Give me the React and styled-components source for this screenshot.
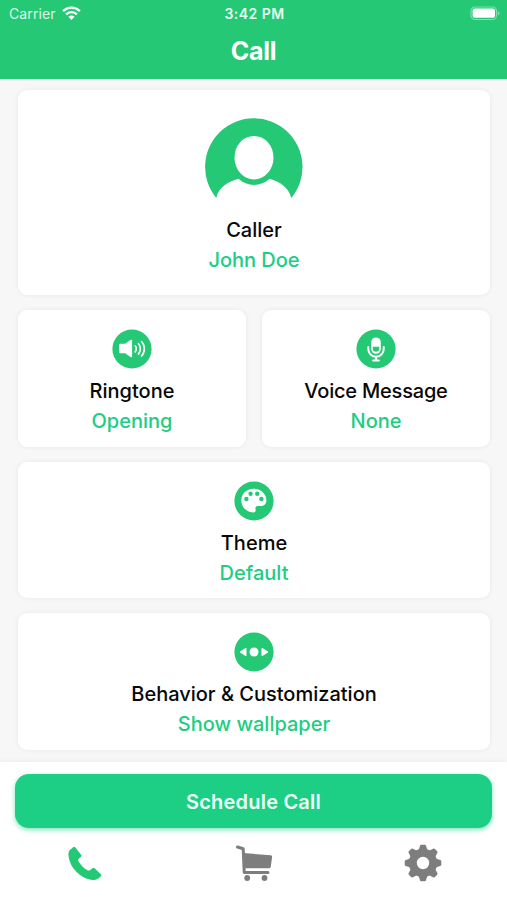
import styled, { createGlobalStyle } from "styled-components";

const GlobalStyle = createGlobalStyle`
  * {
    box-sizing: border-box;
  }

  body {
    margin: 0;
    font-family: Inter, "Liberation Sans", sans-serif;
    background: #f7f7f7;
  }
`;

const Screen = styled.div`
  display: flex;
  flex-direction: column;
  width: 507px;
  height: 900px;
  overflow: hidden;
  background: #f7f7f7;
`;

const Header = styled.header`
  height: 79px;
  flex-shrink: 0;
  color: white;
  background: #25c875;
`;

const StatusBar = styled.div`
  display: grid;
  grid-template-columns: 1fr auto 1fr;
  align-items: center;
  height: 27px;
  padding: 0 7px 0 9px;
`;

const Carrier = styled.div`
  display: flex;
  align-items: center;
  gap: 6px;
  font-size: 14px;
  letter-spacing: 0.1px;
  color: #dcf9e9;
`;

const Time = styled.div`
  font-size: 14px;
  font-weight: 600;
  letter-spacing: 0.45px;
  color: #e8fcf1;
`;

const Battery = styled.svg`
  justify-self: end;
`;

const Title = styled.h1`
  margin: 0;
  font-size: 25px;
  line-height: 48px;
  font-weight: 700;
  letter-spacing: -0.3px;
  text-align: center;
`;

const Content = styled.main`
  display: grid;
  grid-template-columns: 1fr 1fr;
  grid-template-rows: 205px 136.5px 136.5px 136.5px;
  gap: 15px 16px;
  flex: 1;
  min-height: 0;
  padding: 11px 17px 0 18px;
`;

const Card = styled.section`
  display: flex;
  flex-direction: column;
  align-items: center;
  grid-column: ${(props) => (props.$wide ? "1 / -1" : "auto")};
  padding-top: ${(props) => (props.$tall ? "28px" : "19px")};
  border-radius: 9px;
  background: white;
  box-shadow: 0 0 5px rgba(0, 0, 0, 0.07);
`;

const Label = styled.div`
  margin-top: ${(props) => (props.$tall ? "15px" : "7px")};
  font-size: 20px;
  line-height: 30px;
  font-weight: 500;
  letter-spacing: ${(props) => props.$spacing || "0"};
  color: #080808;
`;

const Value = styled.div`
  font-size: 20px;
  line-height: 30px;
  font-weight: 450;
  color: #20cd82;
`;

const Footer = styled.footer`
  height: 138px;
  flex-shrink: 0;
  padding: 12px 15px 0;
  background: white;
  box-shadow: 0 0 6px rgba(0, 0, 0, 0.06);
  z-index: 1;
`;

const ScheduleButton = styled.button`
  display: block;
  width: 100%;
  height: 54px;
  padding: 1px 0 0;
  border: none;
  border-radius: 14px;
  font-family: inherit;
  font-size: 20px;
  font-weight: 600;
  letter-spacing: 0.2px;
  color: #effff7;
  background: #1dcf84;
  box-shadow: 0 2px 5px rgba(29, 207, 132, 0.55);
`;

const Tabs = styled.nav`
  display: grid;
  grid-template-columns: repeat(3, 1fr);
  margin: 15px -15px 0;
`;

const Tab = styled.a`
  display: flex;
  justify-content: center;
  color: ${(props) => (props.$active ? "#23c974" : "#7d7d7d")};
`;

const CircleSvg = styled.svg`
  flex-shrink: 0;
`;

const WifiIcon = () => (
  <svg width="19" height="15" viewBox="0 0 19 15" fill="none" stroke="white" strokeWidth="2.4">
    <path d="M1.1 5.1C5.8.5 13.2.5 17.9 5.1" />
    <path d="M4.1 8.3C7.1 5.4 11.9 5.4 14.9 8.3" />
    <path d="M9.5 14 6.4 10.8C8.1 9.2 10.9 9.2 12.6 10.8Z" fill="white" stroke="none" />
  </svg>
);

const AvatarIcon = () => (
  <svg width="98" height="82" viewBox="0 0 98 82">
    <path
      fill="#25c875"
      d="M11.3 80A48.7 48.7 0 1 1 86.3 80C83.5 69 75 64 64.5 60.8C56 69 42 69 33.5 60.8C23 64 13.5 69 11.3 80Z"
    />
    <ellipse cx="49" cy="39.7" rx="19.5" ry="21.8" fill="white" />
  </svg>
);

const RoundIcon = ({ children }) => (
  <CircleSvg width="40" height="40" viewBox="0 0 40 40">
    <circle cx="20" cy="20" r="19.6" fill="#25c875" />
    {children}
  </CircleSvg>
);

const SpeakerIcon = () => (
  <RoundIcon>
    <path
      d="M8.3 14.7h4.9l5.6-3.9c.6-.4 1.3 0 1.3.7v16c0 .7-.7 1.1-1.3.7l-5.6-3.9H8.3c-.7 0-1.1-.4-1.1-1v-7.6c0-.6.4-1 1.1-1Z"
      fill="white"
    />
    <path
      d="M23.2 16.8c1.5 1.6 1.5 4.5 0 6.1M26.4 14.5c2.6 2.9 2.6 7.7 0 10.6M29.5 12.5c3.8 4 3.8 10.6 0 14.6"
      fill="none"
      stroke="white"
      strokeWidth="1.6"
      strokeLinecap="round"
    />
  </RoundIcon>
);

const MicIcon = () => (
  <RoundIcon>
    <rect x="15.2" y="8.4" width="9.6" height="16.4" rx="4.8" fill="white" />
    <path d="M16.8 17.7h6.4v1.8a3.2 3.2 0 0 1-6.4 0Z" fill="#25c875" />
    <path
      d="M12.3 18v2a7.7 7.7 0 0 0 15.4 0v-2M20 28v3.4M17.2 31.5h5.6"
      fill="none"
      stroke="white"
      strokeWidth="2"
      strokeLinecap="round"
    />
  </RoundIcon>
);

const PaletteIcon = () => (
  <RoundIcon>
    <path
      d="M19.5 7.8C12.7 7.8 7.3 12.8 7.3 19.4c0 6.7 5.4 12 12 12 2 0 2.8-1.3 2.3-3-.5-1.8 0-3.5 1.8-3.5h3.7c3.2 0 5.3-2.4 5.3-5.5C32.4 12.8 26.7 7.8 19.5 7.8Z"
      fill="white"
    />
    <g fill="#25c875">
      <circle cx="12.4" cy="18" r="2.2" />
      <circle cx="16.6" cy="12.7" r="2.2" />
      <circle cx="23.2" cy="12.7" r="2.2" />
      <circle cx="27.4" cy="18" r="2.2" />
    </g>
  </RoundIcon>
);

const BehaviorIcon = () => (
  <RoundIcon>
    <circle cx="20" cy="20" r="4.5" fill="white" />
    <path
      d="M6 20 12 16.2v7.6ZM34 20 28 16.2v7.6Z"
      fill="white"
      stroke="white"
      strokeWidth="1"
      strokeLinejoin="round"
    />
  </RoundIcon>
);

const PhoneIcon = () => (
  <svg width="40" height="40" viewBox="0 0 40 40" fill="currentColor">
    <path d="M8.2 4.2 4.8 7.1C3.4 8.4 3.3 11 3.6 13.3C5 24.8 15.4 36 28 37C31.2 37.2 33 36 35.7 33.6C36.6 32.7 36.4 31.8 35.6 31L29.8 25.4C28.9 24.6 28 24.7 27.1 25.4L25.3 27C24.4 27.9 23.2 27.7 22.1 27C18.7 25 15.9 22.1 13.6 18.4C13 17.4 13.1 16.4 13.9 15.6L15.8 13.9C16.7 13.1 16.6 12.2 15.9 11.4L10.4 4.6C9.8 3.8 9 3.6 8.2 4.2Z" />
  </svg>
);

const CartIcon = () => (
  <svg width="40" height="40" viewBox="0 0 40 40" fill="currentColor">
    <path
      d="M3.5 4 9.2 5.8 10.2 29.5H34"
      fill="none"
      stroke="currentColor"
      strokeWidth="3"
      strokeLinecap="round"
      strokeLinejoin="round"
    />
    <path d="M9.5 10 36.6 12.3C37.8 12.4 38.2 13 38.1 14.1L36.8 23.4C36.6 24.6 36 25.2 34.6 25.2H10Z" />
    <circle cx="13.2" cy="35" r="2.9" />
    <circle cx="30.5" cy="35" r="2.9" />
  </svg>
);

// eight teeth, turned around the centre
const GearIcon = () => (
  <svg width="40" height="40" viewBox="0 0 40 40">
    <g fill="currentColor">
      {[0, 45, 90, 135, 180, 225, 270, 315].map((angle) => (
        <path
          key={angle}
          d="M15 9 17 2.8Q17.2 1.7 18.2 1.7h3.6Q22.8 1.7 23 2.8L25 9Z"
          transform={`rotate(${angle} 20 20)`}
        />
      ))}
    </g>
    <circle cx="20" cy="20" r="10.2" fill="none" stroke="currentColor" strokeWidth="8" />
  </svg>
);

function App() {
  return (
    <Screen>
      <GlobalStyle />
      <Header>
        <StatusBar>
          <Carrier>
            Carrier
            <WifiIcon />
          </Carrier>
          <Time>3:42 PM</Time>
          <Battery width="30" height="15" viewBox="0 0 30 15">
            <rect x="1" y="1" width="25.5" height="12.5" rx="4" fill="none" stroke="#82dfae" strokeWidth="1.2" />
            <rect x="2.6" y="2.6" width="22.4" height="9.2" rx="2" fill="white" />
            <path d="M27.8 5v4.5c2.2-.8 2.2-3.7 0-4.5Z" fill="#82dfae" />
          </Battery>
        </StatusBar>
        <Title>Call</Title>
      </Header>
      <Content>
        <Card $wide $tall>
          <AvatarIcon />
          <Label $tall>Caller</Label>
          <Value>John Doe</Value>
        </Card>
        <Card>
          <SpeakerIcon />
          <Label>Ringtone</Label>
          <Value>Opening</Value>
        </Card>
        <Card>
          <MicIcon />
          <Label $spacing="-0.2px">Voice Message</Label>
          <Value>None</Value>
        </Card>
        <Card $wide>
          <PaletteIcon />
          <Label>Theme</Label>
          <Value>Default</Value>
        </Card>
        <Card $wide>
          <BehaviorIcon />
          <Label>Behavior & Customization</Label>
          <Value>Show wallpaper</Value>
        </Card>
      </Content>
      <Footer>
        <ScheduleButton>Schedule Call</ScheduleButton>
        <Tabs>
          <Tab $active>
            <PhoneIcon />
          </Tab>
          <Tab>
            <CartIcon />
          </Tab>
          <Tab>
            <GearIcon />
          </Tab>
        </Tabs>
      </Footer>
    </Screen>
  );
}

export default App;
